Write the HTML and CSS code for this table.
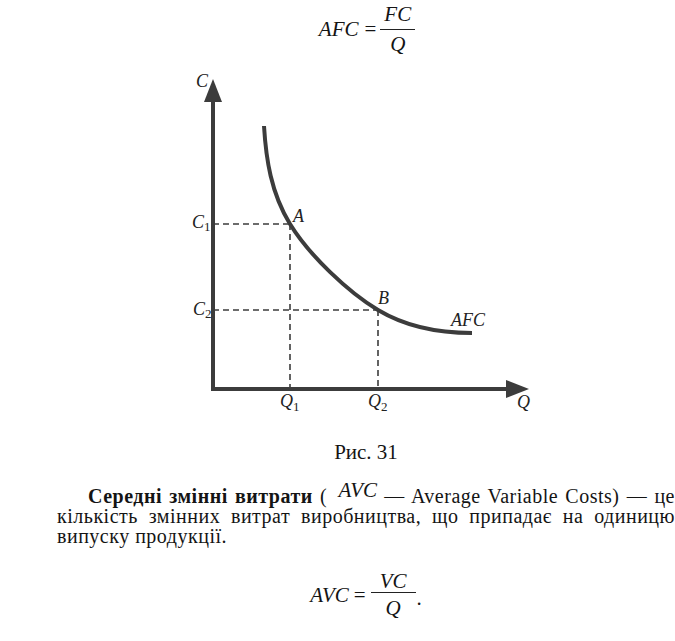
FILE: index.html
```html
<!DOCTYPE html>
<html lang="uk">
<head>
<meta charset="utf-8">
<title>AFC</title>
<link rel="stylesheet" href="styles.css">
</head>
<body>
<div class="page">
  <div class="formula formula-top">
    <span class="var">AFC</span>
    <span class="eq">=</span>
    <span class="frac frac-top">
      <span class="num">FC</span>
      <span class="den">Q</span>
    </span>
  </div>

  <svg class="graph" width="618" height="380" viewBox="57 57 618 380" xmlns="http://www.w3.org/2000/svg">
    <g class="dash">
      <line x1="213" y1="224" x2="290" y2="224"/>
      <line x1="290" y1="224" x2="290" y2="389"/>
      <line x1="213" y1="310" x2="378" y2="310"/>
      <line x1="378" y1="310" x2="378" y2="389"/>
    </g>
    <g class="axis">
      <line x1="213" y1="98" x2="213" y2="391"/>
      <line x1="211" y1="389" x2="510" y2="389"/>
    </g>
    <polygon class="arrow" points="213,79 204,102 222,102"/>
    <polygon class="arrow" points="529,389 506,380 506,398"/>
    <path class="curve" d="M264,126 C266,159 271,193 290,224 C309,255 348,292 378,310 C408,328 441,333 472,333"/>
    <g class="lbl">
      <text x="196" y="87">C</text>
      <text x="192" y="228">C<tspan class="sub" dy="3">1</tspan></text>
      <text x="193" y="315">C<tspan class="sub" dy="3">2</tspan></text>
      <text x="293" y="222">A</text>
      <text x="378" y="304">B</text>
      <text x="451" y="326">AFC</text>
      <text x="280" y="407">Q<tspan class="sub" dy="4">1</tspan></text>
      <text x="368" y="407">Q<tspan class="sub" dy="4">2</tspan></text>
      <text x="517" y="408">Q</text>
    </g>
  </svg>

  <div class="caption">Рис. 31</div>

  <p class="para">
    <span class="line first"><b>Середні змінні витрати</b> ( <span class="avc">AVC</span> — Average Variable Costs) — це</span>
    <span class="line">кількість змінних витрат виробництва, що припадає на одиницю</span>
    <span class="line last">випуску продукції.</span>
  </p>

  <div class="formula formula-bottom">
    <span class="var">AVC</span>
    <span class="eq">=</span>
    <span class="frac frac-bottom">
      <span class="num">VC</span>
      <span class="den">Q</span>
    </span>
    <span class="dot">.</span>
  </div>
</div>
</body>
</html>
```

FILE: styles.css
```css
html, body {
  margin: 0;
  padding: 0;
  background: #ffffff;
}

body {
  width: 675px;
  height: 641px;
  overflow: hidden;
  font-family: "Liberation Serif", "Times New Roman", serif;
  color: #141414;
}

.page {
  margin-left: 57px;
  width: 618px;
}

.formula {
  display: flex;
  justify-content: center;
  align-items: center;
  font-size: 21px;
  line-height: 20px;
}

.formula-top {
  height: 57px;
  padding-left: 2px;
}

.formula-bottom {
  margin-top: 25px;
  height: 47px;
}

.var {
  font-style: italic;
}

.eq {
  margin: 0 4px 0 6px;
}

.frac {
  display: flex;
  flex-direction: column;
  align-items: center;
  font-style: italic;
}

.num {
  display: block;
  border-bottom: 1px solid #222;
  text-align: center;
}

.frac-top .num {
  padding: 0 4px 5px;
}

.frac-top .den {
  padding-top: 4px;
}

.frac-bottom .num {
  padding: 0 9px 1px;
}

.frac-bottom .den {
  padding-top: 5px;
}

.formula-bottom .eq {
  margin: 0 5px 0 5px;
}

.dot {
  margin-left: 1px;
  align-self: center;
  padding-top: 6px;
}

.graph {
  display: block;
}

.axis line {
  stroke: #3c3c3c;
  stroke-width: 4;
}

.arrow {
  fill: #3c3c3c;
}

.curve {
  fill: none;
  stroke: #3c3c3c;
  stroke-width: 4;
}

.dash line {
  stroke: #3c3c3c;
  stroke-width: 1.6;
  stroke-dasharray: 6 4;
}

.lbl text {
  font-family: "Liberation Serif", "Times New Roman", serif;
  font-style: italic;
  font-size: 18px;
  fill: #222;
}

.lbl .sub {
  font-style: normal;
  font-size: 13px;
}

.caption {
  margin-top: 5px;
  text-align: center;
  font-size: 21px;
  line-height: 20px;
}

.para {
  margin: 24px 0 0;
  font-size: 20px;
  line-height: 20px;
  letter-spacing: 0.5px;
}

.line {
  display: block;
  text-align: justify;
  text-align-last: justify;
}

.line.first {
  text-indent: 31px;
}

.line.last {
  text-align: left;
  text-align-last: left;
}

.avc {
  font-style: italic;
  font-size: 21px;
  line-height: 0;
  letter-spacing: 0;
  vertical-align: 6px;
  margin-left: 4px;
}
```
